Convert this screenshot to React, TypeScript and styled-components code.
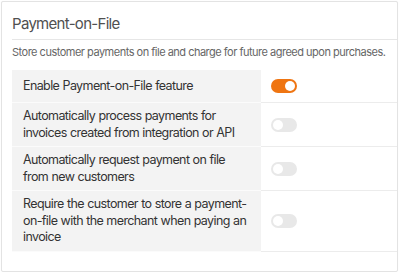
import React, { useState } from "react";
import styled, { createGlobalStyle } from "styled-components";

const GlobalStyles = createGlobalStyle`
  body {
    margin: 0;
    background: #ffffff;
    font-family: Inter, "Noto Sans", sans-serif;
  }
`;

const Card = styled.section`
  margin: 1px 2px 0 1px;
  height: 269px;
  border: 1px solid #e3e3e3;
  border-radius: 2px;
  background: #fff;
  box-shadow: 0 0 1px rgba(0, 0, 0, 0.06);
`;

const Header = styled.div`
  margin-left: 10px;
  padding: 10px 0 8px;
  border-bottom: 1px solid #e6e6e6;
`;

const Title = styled.h2`
  margin: 0;
  font-size: 15px;
  line-height: 14px;
  font-weight: 400;
  letter-spacing: -0.7px;
  color: #505050;
  padding-top: 5px;
`;

const Description = styled.p`
  margin: 5px 0 10px 10px;
  font-size: 11px;
  line-height: 15px;
  letter-spacing: -0.5px;
  color: #666;
`;

const Settings = styled.div`
  margin-left: 10px;
  display: grid;
  grid-template-columns: 249px 1fr;
`;

const Label = styled.div`
  background: #f3f3f3;
  padding: 5px 10px 5px 11px;
  font-size: 12.5px;
  line-height: 16.5px;
  letter-spacing: -0.6px;
  word-spacing: 0.3px;
  color: #333;
  border-bottom: 1px solid #fbfbfb;
  display: flex;
  align-items: center;
`;

const Control = styled.div`
  padding: 9px 10px;
  border-bottom: 1px solid #ececec;
  display: flex;
  align-items: center;
`;

const Track = styled.button<{ $on: boolean }>`
  width: 26px;
  height: 14px;
  border: none;
  padding: 2px;
  border-radius: 7px;
  background: ${(p) => (p.$on ? "#ef7512" : "#e8e8e8")};
  display: flex;
  justify-content: ${(p) => (p.$on ? "flex-end" : "flex-start")};
  cursor: pointer;
`;

const Knob = styled.span`
  width: 10px;
  height: 10px;
  border-radius: 50%;
  background: #fff;
`;

const settings = [
  { label: "Enable Payment-on-File feature", on: true },
  { label: "Automatically process payments for invoices created from integration or API", on: false },
  { label: "Automatically request payment on file from new customers", on: false },
  { label: "Require the customer to store a payment-on-file with the merchant when paying an invoice", on: false },
];

const App: React.FC = () => {
  const [values, setValues] = useState(settings.map((s) => s.on));

  return (
    <>
      <GlobalStyles />
      <Card>
        <Header>
          <Title>Payment-on-File</Title>
        </Header>
        <Description>Store customer payments on file and charge for future agreed upon purchases.</Description>
        <Settings>
          {settings.map((s, i) => (
            <React.Fragment key={s.label}>
              <Label>{s.label}</Label>
              <Control>
                <Track
                  $on={values[i]}
                  onClick={() => setValues((v) => v.map((x, j) => (j === i ? !x : x)))}
                >
                  <Knob />
                </Track>
              </Control>
            </React.Fragment>
          ))}
        </Settings>
      </Card>
    </>
  );
};

export default App;
